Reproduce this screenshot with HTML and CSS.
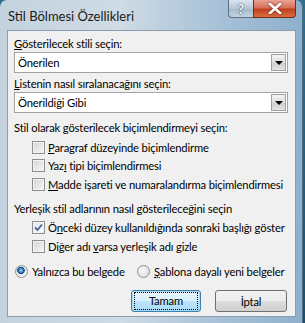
FILE: index.html
```html
<!DOCTYPE html>
<html lang="tr">
<head>
    <meta charset="UTF-8">
    <title>Stil Bölmesi Özellikleri</title>
    <link rel="stylesheet" href="styles.css">
</head>
<body>
    <div class="window">
        <div class="titlebar">
            <span class="title">Stil Bölmesi Özellikleri</span>
            <div class="caption-buttons">
                <div class="cap-btn help">?</div>
                <div class="cap-btn close">
                    <svg width="14" height="11" viewBox="0 0 14 11">
                        <path d="M2 1 L12 10 M12 1 L2 10" stroke="#fff" stroke-width="2.6" stroke-linecap="square"/>
                    </svg>
                </div>
            </div>
        </div>

        <div class="client">
            <div class="label"><u>G</u>österilecek stili seçin:</div>
            <div class="combo">
                <span class="combo-text">Önerilen</span>
                <span class="combo-arrow"><i></i></span>
            </div>

            <div class="label"><u>L</u>istenin nasıl sıralanacağını seçin:</div>
            <div class="combo">
                <span class="combo-text">Önerildiği Gibi</span>
                <span class="combo-arrow"><i></i></span>
            </div>

            <div class="label group-label">Stil olarak gösterilecek biçimlendirmeyi seçin:</div>
            <div class="checks">
                <div class="check-row"><span class="box"></span><span><u>P</u>aragraf düzeyinde biçimlendirme</span></div>
                <div class="check-row"><span class="box"></span><span>Yaz<u>ı</u> tipi biçimlendirmesi</span></div>
                <div class="check-row"><span class="box"></span><span><u>M</u>adde işareti ve numaralandırma biçimlendirmesi</span></div>
            </div>

            <div class="label group-label second">Yerleşik stil adlarının nasıl gösterileceğini seçin</div>
            <div class="checks">
                <div class="check-row">
                    <span class="box checked">
                        <svg width="9" height="9" viewBox="0 0 9 9"><path d="M1 4.5 L3.5 7 L8 1.5" fill="none" stroke="#4a5f97" stroke-width="1.8"/></svg>
                    </span>
                    <span>Ö<u>n</u>ceki düzey kullanıldığında sonraki başlığı göster</span>
                </div>
                <div class="check-row"><span class="box"></span><span>Diğer adı <u>v</u>arsa yerleşik adı gizle</span></div>
            </div>

            <div class="radios">
                <div class="radio-row"><span class="radio selected"></span><span>Yalnızca bu belgede</span></div>
                <div class="radio-row"><span class="radio"></span><span><u>Ş</u>ablona dayalı yeni belgeler</span></div>
            </div>

            <div class="buttons">
                <div class="btn default"><span>Tamam</span></div>
                <div class="btn">İptal</div>
            </div>
        </div>
    </div>
</body>
</html>
```

FILE: styles.css
```css
body {
    margin: 0;
    width: 305px;
    height: 323px;
    overflow: hidden;
    background: linear-gradient(to bottom, #2f6f8e, #1d4f6a);
    font-family: Lato, "Liberation Sans", sans-serif;
    font-size: 11.2px;
    letter-spacing: -0.15px;
    color: #000;
    white-space: nowrap;
}
.window {
    width: 303px;
    height: 323px;
    box-sizing: border-box;
    padding: 0 6px 6px 7px;
    border-radius: 7px 7px 0 0;
    background: linear-gradient(to right, #c3d2de 0%, #cfdbe5 40%, #a9c3d8 70%, #8eb0cc 100%);
    border-right: 1px solid #4d6f85;
    display: flex;
    flex-direction: column;
}
.titlebar {
    height: 30px;
    flex-shrink: 0;
    display: flex;
    justify-content: space-between;
    align-items: flex-start;
}
.title {
    margin-top: 8px;
    margin-left: 1px;
    font-size: 13px;
    letter-spacing: 0;
    color: #1a1a1a;
}
.caption-buttons {
    display: flex;
}
.cap-btn {
    height: 18px;
    box-sizing: border-box;
    border: 1px solid #5f6f80;
    border-top: none;
    display: flex;
    align-items: center;
    justify-content: center;
}
.help {
    width: 25px;
    border-radius: 0 0 0 4px;
    background: linear-gradient(to bottom, #dbe5ee, #b5c6d6 50%, #a3b7ca 51%, #c4d3e0);
    color: #fff;
    font-weight: bold;
    font-size: 13px;
    text-shadow: 0 0 2px #3d4f62, 0 0 1px #3d4f62;
    border-right: none;
}
.close {
    width: 43px;
    border-radius: 0 0 4px 0;
    border-color: #7a2a1c;
    background: linear-gradient(to bottom, #e8a493, #d6705a 45%, #c1401f 55%, #d9703e);
}
.close svg {
    filter: drop-shadow(0 0 1px #6a1d10);
}
.client {
    flex: 1;
    background: #f0f0f0;
    border: 1px solid #8a9cae;
    padding: 5px 7px 0 6px;
    display: flex;
    flex-direction: column;
}
.label {
    height: 15px;
    line-height: 15px;
}
.combo {
    height: 21px;
    box-sizing: border-box;
    margin-top: 1px;
    margin-bottom: 3px;
    background: #fff;
    border: 1px solid #a3a3a3;
    display: flex;
    align-items: center;
    justify-content: space-between;
    padding-left: 3px;
}
.combo-arrow {
    width: 15px;
    height: 17px;
    margin-right: 1px;
    box-sizing: border-box;
    border: 1px solid #a0a0a0;
    background: linear-gradient(to bottom, #f4f4f4, #dcdcdc 50%, #cfcfcf 51%, #e2e2e2);
    display: flex;
    align-items: center;
    justify-content: center;
}
.combo-arrow i {
    width: 0;
    height: 0;
    border-left: 4px solid transparent;
    border-right: 4px solid transparent;
    border-top: 4px solid #000;
}
.group-label {
    margin-top: 4px;
}
.group-label.second {
    margin-top: 7px;
}
.checks {
    display: flex;
    flex-direction: column;
    padding-left: 18px;
    margin-top: 3px;
}
.check-row {
    height: 18.5px;
    display: flex;
    align-items: center;
    gap: 3px;
}
.box {
    width: 13px;
    height: 13px;
    flex-shrink: 0;
    box-sizing: border-box;
    border: 1px solid #8f8f8f;
    background: linear-gradient(135deg, #d4d4d4, #f7f7f7);
    box-shadow: inset 0 0 0 1px #f4f4f4;
    display: flex;
    align-items: center;
    justify-content: center;
}
.box.checked {
    background: linear-gradient(135deg, #dfe6f2, #fafbfd);
}
.radios {
    display: flex;
    gap: 0;
    margin-top: 6.5px;
    padding-left: 1px;
}
.radio-row {
    display: flex;
    align-items: center;
    gap: 4px;
    height: 18px;
    width: 122px;
}
.radio {
    width: 13px;
    height: 13px;
    flex-shrink: 0;
    box-sizing: border-box;
    border-radius: 50%;
    border: 1px solid #8f8f8f;
    background: radial-gradient(circle at 40% 40%, #fcfcfc, #d6d6d6);
}
.radio.selected {
    background: radial-gradient(circle at 45% 40%, #a9d0f2 0, #2a74bb 2.5px, #0d3f7a 3.5px, #e6e6e6 4px, #f4f4f4 6px);
}
.buttons {
    display: flex;
    justify-content: flex-end;
    gap: 14px;
    margin-top: 10px;
    margin-right: 1px;
}
.btn {
    width: 72px;
    height: 22px;
    box-sizing: border-box;
    border: 1px solid #707070;
    border-radius: 3px;
    background: linear-gradient(to bottom, #f2f2f2, #ebebeb 50%, #dddddd 51%, #cfcfcf);
    display: flex;
    align-items: center;
    justify-content: center;
}
.btn.default {
    width: 70px;
    border-color: #3c7fb1;
    box-shadow: inset 0 0 0 1px #a6dcf5;
    background: linear-gradient(to bottom, #eaf6fd, #d9f0fc 50%, #bee6fd 51%, #a7d9f5);
}
.btn.default span {
    outline: 1px dotted #000;
    padding: 1px 0;
    width: 62px;
    box-sizing: border-box;
    text-align: center;
    line-height: 14px;
}
```
